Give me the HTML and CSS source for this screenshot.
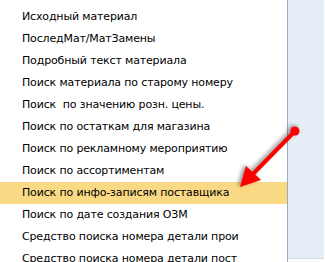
FILE: index.html
```html
<!DOCTYPE html>
<html lang="ru">
<head>
  <meta charset="UTF-8" />
  <title>Средства поиска</title>
  <link rel="stylesheet" href="styles.css">
</head>
<body>
  <div class="screen">
    <ul class="help-list">
      <li>Средство поиска номера детали</li>
      <li>Исходный материал</li>
      <li>ПоследМат/МатЗамены</li>
      <li>Подробный текст материала</li>
      <li>Поиск материала по старому номеру</li>
      <li>Поиск&nbsp; по значению розн. цены.</li>
      <li>Поиск по остаткам для магазина</li>
      <li>Поиск по рекламному мероприятию</li>
      <li>Поиск по ассортиментам</li>
      <li class="selected">Поиск по инфо-записям поставщика</li>
      <li>Поиск по дате создания ОЗМ</li>
      <li>Средство поиска номера детали прои</li>
      <li>Средство поиска номера детали пост</li>
    </ul>
    <div class="side-panel"></div>

    <svg class="arrow" width="325" height="262" viewBox="0 0 325 262">
      <line x1="295" y1="131" x2="252" y2="175" stroke="#ff0000" stroke-width="4" stroke-linecap="round" />
      <circle cx="295" cy="131" r="4.5" fill="#ff0000" />
      <polygon points="240,187 246,166 261,180" fill="#ff0000" />
    </svg>
  </div>
</body>
</html>
```

FILE: styles.css
```css
* {
  box-sizing: border-box;
}

body {
  margin: 0;
  background: #fff;
  font-family: Tahoma, 'DejaVu Sans', sans-serif;
  font-size: 11px;
  color: #000;
  overflow: hidden;
}

.screen {
  position: relative;
  display: flex;
  width: 325px;
  height: 262px;
  overflow: hidden;
}

.help-list {
  list-style: none;
  margin: -16px 0 0;
  padding: 0;
  width: 288px;
  flex-shrink: 0;
  border-right: 1px solid #9aabc3;
}

.help-list li {
  height: 22px;
  line-height: 22px;
  padding-left: 22px;
  letter-spacing: -0.15px;
  white-space: nowrap;
  overflow: hidden;
}

.help-list li.selected {
  background: #fad985;
}

.side-panel {
  flex: 1;
  height: 259px;
  margin-right: 1px;
  background: #e5edf6;
  border-bottom: 1px solid #d3d9e2;
}

.arrow {
  position: absolute;
  left: 0;
  top: 0;
  filter: drop-shadow(-2px -1px 2px rgba(0, 0, 0, 0.45));
}
```
